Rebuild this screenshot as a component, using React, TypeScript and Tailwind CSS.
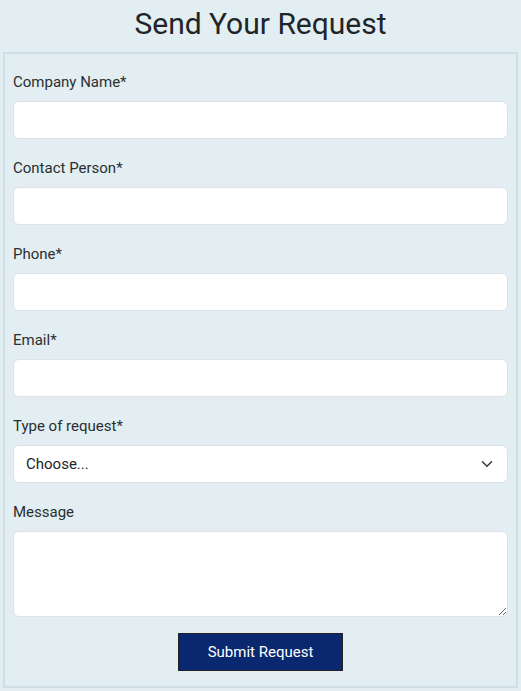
import React from "react";

const fields = ["Company Name*", "Contact Person*", "Phone*", "Email*"];

const inputCls =
  "block w-full h-[38px] bg-white border border-[#dee2e6] rounded-[6px] px-3 text-[15px] text-[#212529] outline-none";

const labelCls = "block text-[15px] leading-[24px] pt-[1px] mb-[7px] text-[#2b2f33]";

const App: React.FC = () => {
  return (
    <div
      className="min-h-screen bg-[#e2eef1] pb-[3px] text-[#212529]"
      style={{ fontFamily: "Roboto, 'Liberation Sans', sans-serif" }}
    >
      <h2 className="text-center text-[30px] leading-[36px] pt-[6px] pb-[10px] text-[#212529]">
        Send Your Request
      </h2>
      <form className="mx-[3px] border-2 border-[#cfdfe5] px-2 pt-[15px] pb-[15px]">
        {fields.map((label) => (
          <div key={label} className="mb-4">
            <label className={labelCls}>{label}</label>
            <input type="text" className={inputCls} />
          </div>
        ))}
        <div className="mb-4">
          <label className={labelCls}>Type of request*</label>
          <div className="relative">
            <select className={inputCls + " appearance-none pr-10"} defaultValue="">
              <option value="">Choose...</option>
            </select>
            <svg
              className="absolute right-[14px] top-[13px] pointer-events-none"
              width="14"
              height="12"
              viewBox="0 0 16 16"
              fill="none"
              stroke="#343a40"
              strokeWidth="2"
              strokeLinecap="round"
              strokeLinejoin="round"
            >
              <path d="m2 5 6 6 6-6" />
            </svg>
          </div>
        </div>
        <div className="mb-4">
          <label className={labelCls}>Message</label>
          <textarea className="block w-full h-[86px] bg-white border border-[#dee2e6] rounded-[6px] px-3 py-2 text-[15px] outline-none" />
        </div>
        <div className="flex justify-center">
          <button
            type="button"
            className="w-[165px] h-[38px] bg-[#0a2870] border border-[#222] text-white text-[15px]"
          >
            Submit Request
          </button>
        </div>
      </form>
    </div>
  );
};

export default App;
